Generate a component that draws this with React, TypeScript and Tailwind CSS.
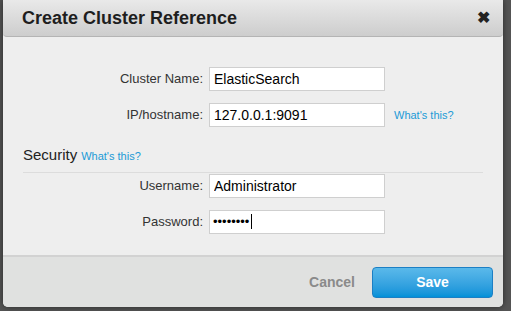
export default function App() {
  const font = { fontFamily: '"Liberation Sans", Arial, sans-serif' };
  return (
    <div className="w-[511px] h-[311px] bg-[#545454] overflow-hidden relative" style={font}>
      <div className="absolute left-[3px] top-0 w-[500px] h-[307px] bg-[#eeeeee] rounded-b-[5px] flex flex-col shadow-[0_0_6px_rgba(0,0,0,0.5)]">
        {/* header */}
        <div className="h-[37px] shrink-0 flex items-center justify-between pl-[19px] pr-[13px] bg-gradient-to-b from-[#e9e9e9] to-[#cdcdcd] border-b border-[#b4b4b4] rounded-b-[4px]">
          <h1 className="text-[18px] font-bold text-[#1e1e1e] leading-none">Create Cluster Reference</h1>
          <span className="text-[16px] font-bold text-[#222] leading-none">✖</span>
        </div>

        {/* body */}
        <div className="flex-1 flex flex-col pt-[30px] px-[20px]">
          <div className="flex items-center h-[24px]">
            <label className="w-[186px] text-right pr-[6px] text-[13px] text-[#333]">Cluster Name:</label>
            <input
              readOnly
              value="ElasticSearch"
              className="w-[176px] h-[24px] bg-white border border-[#cfcfcf] px-[4px] text-[14px] text-black outline-none"
            />
          </div>
          <div className="flex items-center h-[24px] mt-[12px]">
            <label className="w-[186px] text-right pr-[6px] text-[13px] text-[#333]">IP/hostname:</label>
            <input
              readOnly
              value="127.0.0.1:9091"
              className="w-[176px] h-[24px] bg-white border border-[#cfcfcf] px-[4px] text-[14px] text-black outline-none"
            />
            <a className="ml-[9px] text-[11px] text-[#1b9ad6]">What's this?</a>
          </div>

          <div className="mt-[17px] flex items-baseline gap-[4px] pb-[5px] border-b border-[#dcdcdc] w-[460px]">
            <span className="text-[15px] text-[#222]">Security</span>
            <a className="text-[11px] text-[#1b9ad6]">What's this?</a>
          </div>

          <div className="flex items-center h-[24px] mt-[1px]">
            <label className="w-[186px] text-right pr-[6px] text-[13px] text-[#333]">Username:</label>
            <input
              readOnly
              value="Administrator"
              className="w-[176px] h-[24px] bg-white border border-[#cfcfcf] px-[4px] text-[14px] text-black outline-none"
            />
          </div>
          <div className="flex items-center h-[24px] mt-[12px]">
            <label className="w-[186px] text-right pr-[6px] text-[13px] text-[#333]">Password:</label>
            <div className="w-[176px] h-[24px] bg-white border border-[#cfcfcf] px-[3px] flex items-center text-[13px] text-black">
              <span>••••••••</span>
              <span className="ml-[2px] w-px h-[15px] bg-black" />
            </div>
          </div>
        </div>

        {/* footer */}
        <div className="h-[52px] shrink-0 border-t-2 border-[#d2d2d2] bg-[#e0e1e0] rounded-b-[5px] flex items-center justify-end pr-[10px]">
          <span className="text-[14px] font-bold text-[#8a8a8a] mr-[17px]">Cancel</span>
          <button className="w-[121px] h-[31px] rounded-[4px] border border-[#1c7fc4] bg-gradient-to-b from-[#5ab9ea] to-[#0091d8] text-white text-[14px] font-bold">
            Save
          </button>
        </div>
      </div>
    </div>
  );
}
